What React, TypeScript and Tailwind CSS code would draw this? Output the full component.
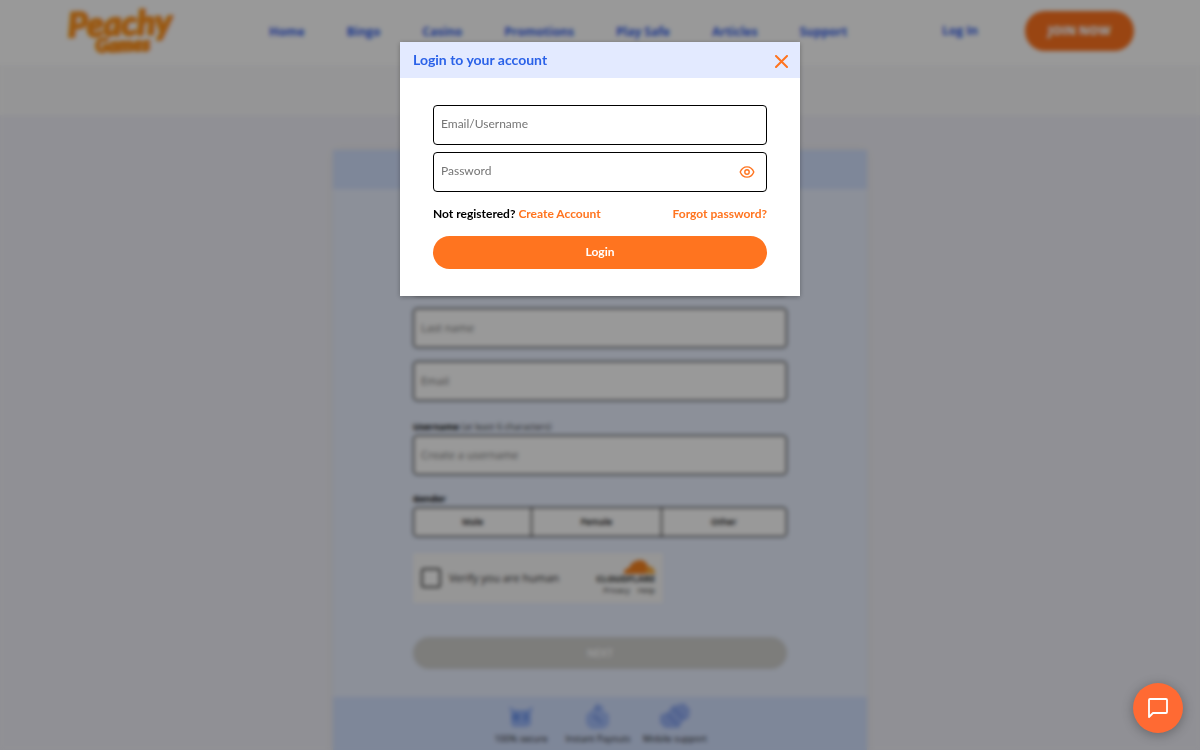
// Sign-up page with the login dialog open on top of it.
// The page scroll is locked while the dialog is up, the overlay dims and blurs it.

import { useState } from "react";

const NAV = ["Home", "Bingo", "Casino", "Promotions", "Play Safe", "Articles", "Support"];

function Logo() {
  return (
    <svg width="124" height="60" viewBox="0 0 124 60" role="img" aria-label="Peachy Games" className="overflow-visible">
      <g
        transform="rotate(-2 40 30)"
        fill="#ff9420"
        stroke="#ff9420"
        strokeLinejoin="round"
        fontFamily="Lato, sans-serif"
        fontStyle="italic"
        fontWeight="900"
      >
        <text x="2" y="35" fontSize="34" strokeWidth="2">
          Peachy
        </text>
        <text x="29" y="51" fontSize="19" strokeWidth="2">
          Games
        </text>
      </g>
    </svg>
  );
}

function Header() {
  return (
    <header className="flex h-[65px] shrink-0 items-center bg-white px-[66px] pb-1 text-xs font-bold text-[#3461ea]">
      <a href="#home" className="shrink-0">
        <Logo />
      </a>
      <nav className="ml-[79px] flex gap-[42px] pt-0.5 whitespace-nowrap">
        {NAV.map((item) => (
          <a key={item} href={"#" + item.toLowerCase().replace(" ", "-")}>
            {item}
          </a>
        ))}
      </nav>
      <div className="ml-auto flex items-center gap-[47px] whitespace-nowrap">
        <a href="#login">Log In</a>
        <button className="h-10 w-[109px] rounded-full bg-[#ff741f] font-extrabold text-white">JOIN NOW</button>
      </div>
    </header>
  );
}

function Field({ id, placeholder }: { id: string; placeholder: string }) {
  return (
    <input
      id={id}
      aria-label={placeholder}
      placeholder={placeholder}
      className="block h-10 w-full rounded border border-black bg-white px-[7px] pb-0.5 text-[11px] placeholder:text-[#757575]"
    />
  );
}

// human check widget
function Turnstile() {
  return (
    <div className="mt-4 flex h-[50px] w-[250px] items-center justify-between bg-[#fafafa] px-2 text-[#232323]">
      <label className="flex items-center gap-2 text-[11px]">
        <input
          type="checkbox"
          className="size-5 appearance-none rounded-[3px] border-2 border-[#555] bg-white"
        />
        Verify you are human
      </label>
      <div className="flex flex-col items-end">
        <svg width="32" height="14" viewBox="0 0 32 14" aria-hidden="true">
          <path d="M1 14a5 5 0 0 1 5-6A12 10 0 0 1 17 0c5 0 8 4 8 8l-2 6Z" fill="#f6821f" />
          <path d="M23 14l2-8c4 0 7 3 7 8Z" fill="#fbad41" />
        </svg>
        <span className="text-[9px] leading-[9px] font-bold">CLOUDFLARE</span>
        <span className="flex gap-2 text-[8px] leading-[13px]">
          <a href="#privacy">Privacy</a>
          <a href="#help">Help</a>
        </span>
      </div>
    </div>
  );
}

function Perks() {
  return (
    <div className="flex h-[90px] justify-center gap-3 bg-[#d3e1ff] pt-1.5 pr-1 text-[9px] leading-3 text-[#222]">
      <div className="flex w-[65px] flex-col items-center gap-1">
        <svg width="28" height="26" viewBox="0 0 28 26" fill="#9ab8fb" aria-hidden="true">
          <path d="M2 3l6 4h12l6-4-2 8v11l-5 2H6l-2-3V10Z" />
          <circle cx="9" cy="14" r="4" fill="#7199ee" />
          <path d="M17 10h4v8h-4Z" fill="#7199ee" />
        </svg>
        100% secure
      </div>
      <div className="flex w-[65px] flex-col items-center gap-1 whitespace-nowrap">
        <svg width="28" height="26" viewBox="0 0 28 26" fill="#a5bffb" aria-hidden="true">
          <path d="M13 0l7 4-1 4 6 3v11l-6 4H7l-5-5V12l7-6Z" />
          <path d="M13 2l4 3-4 3-3-3ZM8 14l3-3 8 8-2 2Z" fill="#86a5ee" />
        </svg>
        Instant Payouts
      </div>
      <div className="flex w-[65px] flex-col items-center gap-1 whitespace-nowrap">
        <svg width="30" height="26" viewBox="0 0 30 26" fill="#9ab4f6" aria-hidden="true">
          <path d="M12 3l12-3 6 6-1 9-6 3-4 7H5l-5-5V12l8-3Z" />
          <path d="M7 11l11 11M13 5l11 11" stroke="#7c9cec" strokeWidth="2" />
        </svg>
        Mobile support
      </div>
    </div>
  );
}

function SignUpPage() {
  return (
    <div className="flex h-full flex-col overflow-hidden bg-[#f1f1f8]">
      <Header />
      <div className="h-[50px] shrink-0 bg-[#f9f9fb]" />
      <main className="mx-auto mt-[35px] w-full max-w-[534px] shrink-0 bg-[#e9f0ff] shadow-[0_0_10px_rgba(0,0,0,0.05)]">
        <div className="h-[39px] bg-[#d3e1ff]" />
        <form className="px-20 pt-[66px] pb-7">
          <div className="flex flex-col gap-[13px]">
            <Field id="first-name" placeholder="First name" />
            <Field id="last-name" placeholder="Last name" />
            <Field id="email" placeholder="Email" />
          </div>
          <label htmlFor="new-username" className="mt-[18px] block text-[9px] leading-4 text-[#333]">
            <b className="text-black">Username</b> (at least 6 characters)
          </label>
          <Field id="new-username" placeholder="Create a username" />

          <div className="mt-4 text-[9px] leading-4 font-bold">Gender</div>
          <div className="grid h-[30px] grid-cols-[119fr_130fr_125fr] divide-x divide-black rounded border border-black bg-white text-[9px] font-semibold">
            <button type="button">Male</button>
            <button type="button">Female</button>
            <button type="button">Other</button>
          </div>
          <Turnstile />
          <button
            type="button"
            className="mt-[34px] block h-8 w-full rounded-full bg-[#d0d0ce] text-[10px] font-bold text-white"
          >
            NEXT
          </button>
        </form>
        <Perks />
      </main>
    </div>
  );
}

function LoginDialog() {
  const [showPassword, setShowPassword] = useState(false);
  const field =
    "block h-10 w-full rounded border border-black bg-white px-[7px] pb-1 text-xs text-black outline-none placeholder:text-[#757575]";

  return (
    <div
      role="dialog"
      aria-labelledby="login-title"
      className="mx-auto mt-[42px] w-full max-w-[400px] bg-white font-[Lato,sans-serif] shadow-[0_1px_5px_rgba(0,0,0,0.3)]"
    >
      <div className="flex h-9 items-center justify-between bg-[#e3eaff] pr-3 pl-[13px]">
        <h2 id="login-title" className="text-sm font-bold text-[#2b62e8]">
          Login to your account
        </h2>
        <button aria-label="Close" className="mt-0.5 text-[#ff741f]">
          <svg width="13" height="13" viewBox="0 0 13 13" stroke="currentColor" strokeWidth="2" strokeLinecap="round">
            <path d="M1 1l11 11M12 1L1 12" />
          </svg>
        </button>
      </div>
      <form className="px-[33px] pt-[27px] pb-[27px]" onSubmit={(e) => e.preventDefault()}>
        <input aria-label="Email/Username" placeholder="Email/Username" className={field} />
        <div className="relative mt-[7px]">
          <input
            type={showPassword ? "text" : "password"}
            aria-label="Password"
            placeholder="Password"
            className={field}
          />
          <button
            type="button"
            aria-label="Show password"
            onClick={() => setShowPassword((v) => !v)}
            className="absolute inset-y-0 right-3 text-[#ff741f]"
          >
            <svg width="16" height="12" viewBox="0 0 16 12" fill="none" stroke="currentColor" strokeWidth="1.4">
              <path d="M1.2 6C2.6 2.6 5 .9 8 .9S13.4 2.6 14.8 6C13.4 9.4 11 11.1 8 11.1S2.6 9.4 1.2 6Z" strokeLinejoin="round" />
              <circle cx="8" cy="6" r="2.2" />
            </svg>
          </button>
        </div>
        <div className="mt-3 flex justify-between text-xs leading-5 font-bold whitespace-nowrap">
          <span>
            Not registered?{" "}
            <a href="#register" className="text-[#ff741f]">
              Create Account
            </a>
          </span>
          <a href="#forgot" className="text-[#ff741f]">
            Forgot password?
          </a>
        </div>
        <button className="mt-3 block h-[33px] w-full rounded-full bg-[#ff741f] pb-0.5 text-xs font-bold text-white">
          Login
        </button>
      </form>
    </div>
  );
}

export default function App() {
  return (
    <div className="h-screen overflow-hidden font-['Open_Sans',sans-serif] text-black">
      <SignUpPage />
      <div className="fixed inset-0 bg-black/40 backdrop-blur-[2px]">
        <LoginDialog />
      </div>
      <button
        aria-label="Open chat"
        className="fixed right-[17px] bottom-[17px] grid size-[50px] place-items-center rounded-full bg-[#ff6a33] text-white shadow-[0_2px_12px_rgba(0,0,0,0.3)]"
      >
        <svg width="22" height="22" viewBox="0 0 22 22" fill="none" stroke="currentColor" strokeWidth="1.8" strokeLinejoin="round">
          <path d="M2 20V3a1 1 0 0 1 1-1h16a1 1 0 0 1 1 1v12a1 1 0 0 1-1 1H6Z" />
        </svg>
      </button>
    </div>
  );
}
